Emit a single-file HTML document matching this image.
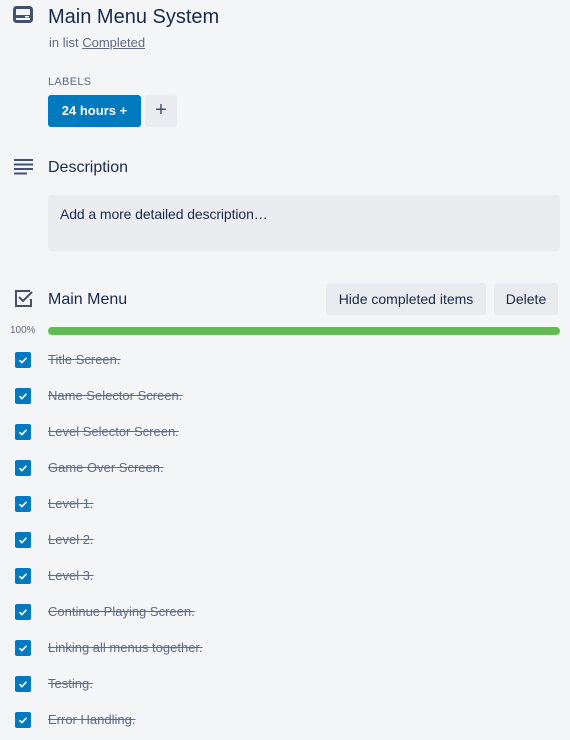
<!DOCTYPE html><html><head><style>
body{margin:0;width:570px;height:740px;background:#f4f5f7;font-family:"Liberation Sans",sans-serif;color:#172b4d;position:relative;overflow:hidden}
.a{position:absolute}
.item{position:absolute;left:0;height:20px;width:570px}
.cb{position:absolute;left:15px;top:0;width:16px;height:16px;background:#0079bf;border-radius:2px}
.it{position:absolute;left:48px;top:0;font-size:13px;color:#5e6c84;text-decoration:line-through;line-height:16px}
.btn{position:absolute;background:#e9ebee;border-radius:3px;font-size:14px;color:#172b4d;text-align:center;line-height:32px;height:32px}
</style></head><body>
<svg class="a" style="left:13px;top:6px" width="20" height="18" viewBox="0 0 20 18"><rect x="1.5" y="1.5" width="17" height="14" rx="2" fill="none" stroke="#42526e" stroke-width="3"/><rect x="3" y="9" width="14" height="3" fill="#42526e"/><rect x="12" y="10" width="4" height="1.5" fill="#fff"/></svg>
<div class="a" style="left:48px;top:5px;font-size:20px;line-height:24px">Main Menu System</div>
<div class="a" style="left:49px;top:35px;font-size:13px;color:#5e6c84">in list <u>Completed</u></div>
<div class="a" style="left:48px;top:76px;font-size:11px;color:#5e6c84;letter-spacing:.3px">LABELS</div>
<div class="a" style="left:48px;top:95px;width:93px;height:32px;background:#0079bf;border-radius:3px;color:#fff;font-weight:bold;font-size:13px;line-height:32px;text-align:center">24 hours +</div>
<div class="a" style="left:145px;top:95px;width:32px;height:32px;background:#ebecf0;border-radius:3px;color:#42526e;font-size:20px;line-height:31px;text-align:center">+</div>
<svg class="a" style="left:14px;top:159px" width="20" height="16"><g fill="#42526e"><rect x="0" y="0" width="19" height="2"/><rect x="0" y="4.5" width="19" height="2"/><rect x="0" y="9" width="19" height="2"/><rect x="0" y="13.5" width="13" height="2"/></g></svg>
<div class="a" style="left:48px;top:159px;font-size:16px">Description</div>
<div class="a" style="left:48px;top:195px;width:512px;height:56px;background:#ebecf0;border-radius:3px"></div>
<div class="a" style="left:60px;top:206px;font-size:14px;color:#172b4d;letter-spacing:-.1px">Add a more detailed description…</div>
<svg class="a" style="left:14px;top:290px" width="20" height="18" viewBox="0 0 20 18"><path d="M16 1H2v15h15V9" fill="none" stroke="#42526e" stroke-width="2"/><path d="M5 7l4 4 9-9" fill="none" stroke="#42526e" stroke-width="2"/></svg>
<div class="a" style="left:48px;top:291px;font-size:16px">Main Menu</div>
<div class="btn" style="left:326px;top:283px;width:160px">Hide completed items</div>
<div class="btn" style="left:494px;top:283px;width:64px">Delete</div>
<div class="a" style="left:10px;top:325px;font-size:10px;color:#5e6c84">100%</div>
<div class="a" style="left:48px;top:327px;width:512px;height:8px;background:#61bd4f;border-radius:4px"></div>
<div id="list"></div>
<script>
var t=["Title Screen.","Name Selector Screen.","Level Selector Screen.","Game Over Screen.","Level 1.","Level 2.","Level 3.","Continue Playing Screen.","Linking all menus together.","Testing.","Error Handling."];
var h="";t.forEach(function(s,i){h+='<div class="item" style="top:'+(352+36*i)+'px"><div class="cb"><svg width="16" height="16"><path d="M4.5 8.2l2.4 2.4 4.6-4.8" fill="none" stroke="#fff" stroke-width="1.6"/></svg></div><div class="it">'+s+'</div></div>'});
document.getElementById("list").innerHTML=h;
</script>
</body></html>
